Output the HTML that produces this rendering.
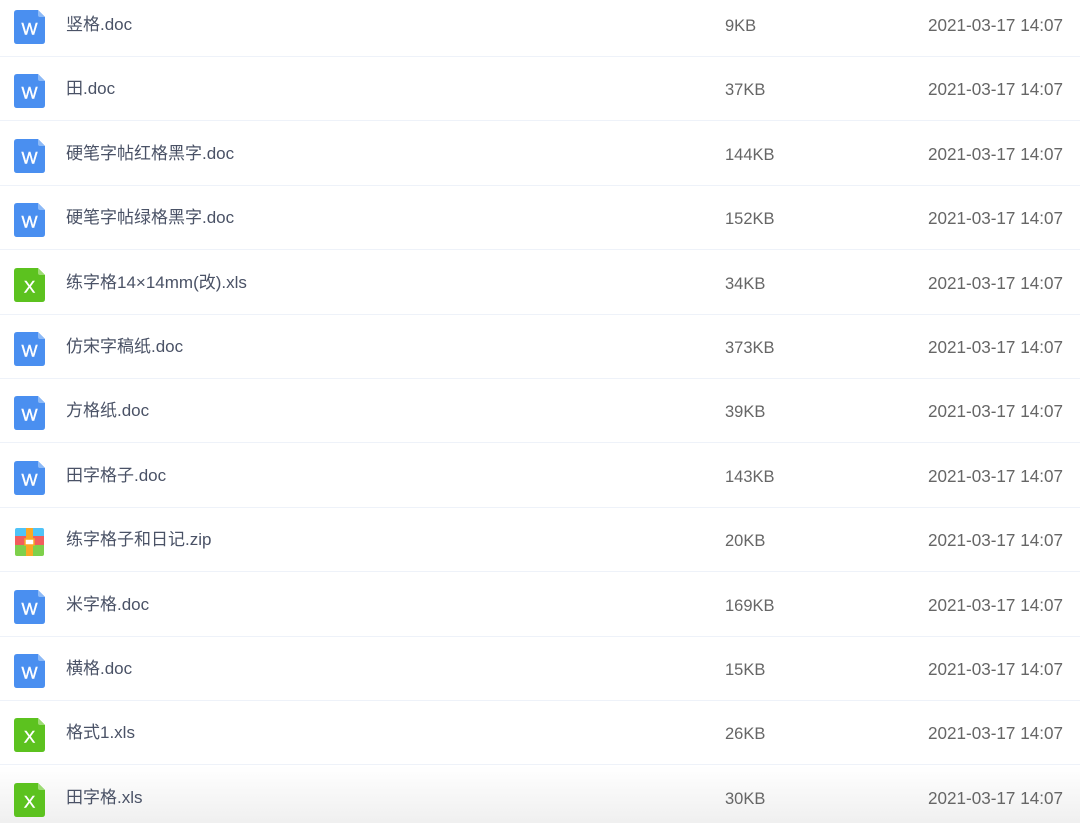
<!DOCTYPE html>
<html><head><meta charset="utf-8"><style>
html,body{margin:0;width:1080px;height:823px;overflow:hidden}
body{background:#fff;font-family:"Liberation Sans","Noto Sans CJK SC",sans-serif;position:relative}
.r{position:absolute;left:0;width:1080px;height:64px;border-bottom:1.5px solid #eef2f9;box-sizing:border-box}
.ic{position:absolute;left:14px;top:17px;width:31px;height:34px}
.n{position:absolute;left:66px;top:22px;font-size:17px;color:#4a5266;line-height:20px}
.s{position:absolute;left:725px;top:23px;font-size:16.5px;color:#666;line-height:20px}
.d{position:absolute;left:928px;top:23px;font-size:17.1px;color:#666;line-height:20px}
.last{background:linear-gradient(#fff,#ececec);border-bottom:none;height:70px}
</style></head><body>
<svg width="0" height="0" style="position:absolute"><defs>
<symbol id="w" viewBox="0 0 31 34"><path d="M3 0H24L31 7V31Q31 34 28 34H3Q0 34 0 31V3Q0 0 3 0Z" fill="#4a8ff0"/><path d="M24 0L31 7H26Q24 7 24 5Z" fill="#8dbaf7"/><text x="15.5" y="24.5" text-anchor="middle" font-family="Liberation Sans" font-size="17" fill="#fff" stroke="#fff" stroke-width="0.4">W</text></symbol>
<symbol id="x" viewBox="0 0 31 34"><path d="M3 0H24L31 7V31Q31 34 28 34H3Q0 34 0 31V3Q0 0 3 0Z" fill="#5cc21f"/><path d="M24 0L31 7H26Q24 7 24 5Z" fill="#9ddc74"/><text x="15.5" y="24.5" text-anchor="middle" font-family="Liberation Sans" font-size="17" fill="#fff" stroke="#fff" stroke-width="0.4">X</text></symbol>
<symbol id="z" viewBox="0 0 31 34"><rect x="1" y="3" width="29" height="10" rx="2" fill="#4fc3f7"/><rect x="1" y="11" width="29" height="11" fill="#f25d5d"/><rect x="1" y="21" width="29" height="10" rx="2" fill="#7ed04b"/><rect x="1" y="20" width="29" height="3" fill="#7ed04b"/><rect x="12" y="3" width="7" height="28" fill="#f9a825"/><rect x="11" y="14" width="9" height="6" fill="#fff" stroke="#f9a825" stroke-width="1.5"/></symbol>
</defs></svg>
<div class="r" style="top:-7px"><svg class="ic"><use href="#w"/></svg><div class="n">竖格.doc</div><div class="s">9KB</div><div class="d">2021-03-17 14:07</div></div>
<div class="r" style="top:57.4px"><svg class="ic"><use href="#w"/></svg><div class="n">田.doc</div><div class="s">37KB</div><div class="d">2021-03-17 14:07</div></div>
<div class="r" style="top:121.8px"><svg class="ic"><use href="#w"/></svg><div class="n">硬笔字帖红格黑字.doc</div><div class="s">144KB</div><div class="d">2021-03-17 14:07</div></div>
<div class="r" style="top:186.2px"><svg class="ic"><use href="#w"/></svg><div class="n">硬笔字帖绿格黑字.doc</div><div class="s">152KB</div><div class="d">2021-03-17 14:07</div></div>
<div class="r" style="top:250.6px"><svg class="ic"><use href="#x"/></svg><div class="n">练字格14×14mm(改).xls</div><div class="s">34KB</div><div class="d">2021-03-17 14:07</div></div>
<div class="r" style="top:315px"><svg class="ic"><use href="#w"/></svg><div class="n">仿宋字稿纸.doc</div><div class="s">373KB</div><div class="d">2021-03-17 14:07</div></div>
<div class="r" style="top:379.4px"><svg class="ic"><use href="#w"/></svg><div class="n">方格纸.doc</div><div class="s">39KB</div><div class="d">2021-03-17 14:07</div></div>
<div class="r" style="top:443.8px"><svg class="ic"><use href="#w"/></svg><div class="n">田字格子.doc</div><div class="s">143KB</div><div class="d">2021-03-17 14:07</div></div>
<div class="r" style="top:508.2px"><svg class="ic"><use href="#z"/></svg><div class="n">练字格子和日记.zip</div><div class="s">20KB</div><div class="d">2021-03-17 14:07</div></div>
<div class="r" style="top:572.6px"><svg class="ic"><use href="#w"/></svg><div class="n">米字格.doc</div><div class="s">169KB</div><div class="d">2021-03-17 14:07</div></div>
<div class="r" style="top:637px"><svg class="ic"><use href="#w"/></svg><div class="n">横格.doc</div><div class="s">15KB</div><div class="d">2021-03-17 14:07</div></div>
<div class="r" style="top:701.4px"><svg class="ic"><use href="#x"/></svg><div class="n">格式1.xls</div><div class="s">26KB</div><div class="d">2021-03-17 14:07</div></div>
<div class="r last" style="top:765.8px"><svg class="ic"><use href="#x"/></svg><div class="n">田字格.xls</div><div class="s">30KB</div><div class="d">2021-03-17 14:07</div></div>
</body></html>
